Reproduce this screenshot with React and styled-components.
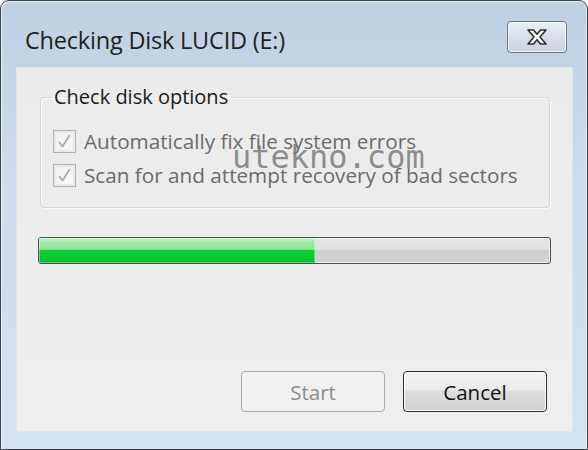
import React from "react";
import styled, { createGlobalStyle } from "styled-components";

const Global = createGlobalStyle`
  html, body { margin: 0; padding: 0; background: #ffffff; }
  body { width: 588px; height: 450px; overflow: hidden; font-family: "Open Sans", "Noto Sans", sans-serif; }
  * { box-sizing: border-box; }
`;

const Window = styled.div`
  position: relative;
  width: 588px;
  height: 450px;
  border: 1px solid #3c4148;
  border-radius: 9px 9px 0 0;
  background: linear-gradient(180deg, #c0d0e2 0%, #cddbea 40%, #d5e2ef 100%);
  box-shadow: inset 1px 1px 0 rgba(255,255,255,0.7), inset -1px 0 0 rgba(255,255,255,0.5);
  display: flex;
  flex-direction: column;
  padding: 0 14px 17px 15px;
`;

const TitleBar = styled.div`
  height: 66px;
  display: flex;
  align-items: flex-start;
  justify-content: space-between;
  padding: 0 6px 0 9px;
`;

const Title = styled.div`
  font-size: 23.5px;
  line-height: 30px;
  color: #1f1f1f;
  letter-spacing: -0.2px;
  margin-top: 24px;
`;

const CloseButton = styled.button`
  width: 60px;
  height: 32px;
  margin-top: 20px;
  border: 1px solid #6f7784;
  border-radius: 4px;
  background: linear-gradient(180deg, #e9eff6 0%, #d6dfea 50%, #c9d4e1 100%);
  box-shadow: inset 0 0 0 1px rgba(255,255,255,0.75);
  display: flex;
  align-items: center;
  justify-content: center;
  padding: 0;
`;

const Client = styled.div`
  position: relative;
  flex: 1;
  background: linear-gradient(180deg, #ebebeb 0%, #eeeeee 100%);
  border: 1px solid #dde5ee;
  display: flex;
  flex-direction: column;
  padding: 0 21px 19px 21px;
`;

const Group = styled.fieldset`
  margin: 17px 1px 0 2px;
  padding: 21px 12px 20px 12px;
  border: 1px solid #d0d6dc;
  border-radius: 4px;
  box-shadow: inset 1px 1px 0 #fafafa, 1px 1px 0 #fafafa;
  min-inline-size: 0;
`;

const Legend = styled.legend`
  font-size: 20px;
  line-height: 24px;
  color: #1a1a1a;
  padding: 0 3px;
  margin-left: -2px;
`;

const OptionList = styled.div`
  display: flex;
  flex-direction: column;
  gap: 11px;
`;

const Option = styled.label`
  display: flex;
  align-items: center;
  gap: 8px;
  font-size: 20.7px;
  line-height: 23px;
  color: #6b6b6b;
  white-space: nowrap;
`;

const Box = styled.span`
  width: 23px;
  height: 23px;
  flex: none;
  border: 1px solid #b3b3b3;
  background: linear-gradient(135deg, #f0f0f0 0%, #f7f7f7 100%);
  box-shadow: inset 0 0 0 2px #e9e9e9;
  display: flex;
  align-items: center;
  justify-content: center;
`;

const Progress = styled.div`
  margin-top: 29px;
  height: 27px;
  border: 1px solid #4d4d4d;
  border-radius: 3px;
  background: linear-gradient(180deg, #e6e6e6 0%, #e1e1e1 45%, #cdcdcd 50%, #d3d3d3 100%);
  box-shadow: inset 0 0 0 1px #f5f5f5;
  overflow: hidden;
  display: flex;
`;

const Fill = styled.div`
  height: 100%;
  background: linear-gradient(180deg, #c8f3cc 0%, #9be8a4 20%, #8fe59a 45%, #0ed13a 50%, #06c832 85%, #0bb633 100%);
  box-shadow: inset 0 0 0 1px rgba(255,255,255,0.35);
`;

const Spacer = styled.div`
  flex: 1;
`;

const Buttons = styled.div`
  display: flex;
  justify-content: flex-end;
  gap: 18px;
  margin-right: 4px;
`;

const Button = styled.button`
  width: 144px;
  height: 41px;
  border-radius: 4px;
  font-family: "Open Sans", "Noto Sans", sans-serif;
  font-size: 20.5px;
  padding: 0;
  border: 1px solid ${(p) => (p.$primary ? "#2f2f2f" : "#adadad")};
  color: ${(p) => (p.$primary ? "#111111" : "#8c8c8c")};
  background: ${(p) =>
    p.$primary
      ? "linear-gradient(180deg, #f3f3f3 0%, #ebebeb 45%, #dddddd 50%, #d2d2d2 100%)"
      : "#f1f1f1"};
  box-shadow: ${(p) => (p.$primary ? "inset 0 0 0 1px #fcfcfc" : "none")};
`;

const Watermark = styled.div`
  position: absolute;
  left: 215px;
  top: 70px;
  font-family: "DejaVu Sans Mono", "Liberation Mono", monospace;
  font-size: 32px;
  color: rgba(110, 110, 110, 0.75);
  pointer-events: none;
`;

const Check = () => (
  <svg width="15" height="15" viewBox="0 0 15 15">
    <path d="M2.5 8.5 L5.5 12.5 L12.5 1.5" fill="none" stroke="#a9a9a9" strokeWidth="1.6" strokeLinecap="round" strokeLinejoin="round" />
  </svg>
);

const CloseGlyph = () => (
  <svg width="24" height="18" viewBox="0 0 24 18">
    <path
      d="M3 2 H8.5 L12 6.2 L15.5 2 H21 L15 9 L21 16 H15.5 L12 11.8 L8.5 16 H3 L9 9 Z"
      fill="#ffffff"
      stroke="#2a2f38"
      strokeWidth="1.6"
      strokeLinejoin="round"
    />
  </svg>
);

export default function App() {
  const progress = 54;
  return (
    <>
      <Global />
      <Window>
        <TitleBar>
          <Title>Checking Disk LUCID (E:)</Title>
          <CloseButton aria-label="Close">
            <CloseGlyph />
          </CloseButton>
        </TitleBar>
        <Client>
          <Group>
            <Legend>Check disk options</Legend>
            <OptionList>
              <Option>
                <Box><Check /></Box>
                Automatically fix file system errors
              </Option>
              <Option>
                <Box><Check /></Box>
                Scan for and attempt recovery of bad sectors
              </Option>
            </OptionList>
          </Group>
          <Progress>
            <Fill style={{ width: `${progress}%` }} />
          </Progress>
          <Spacer />
          <Buttons>
            <Button disabled>Start</Button>
            <Button $primary>Cancel</Button>
          </Buttons>
          <Watermark>utekno.com</Watermark>
        </Client>
      </Window>
    </>
  );
}
